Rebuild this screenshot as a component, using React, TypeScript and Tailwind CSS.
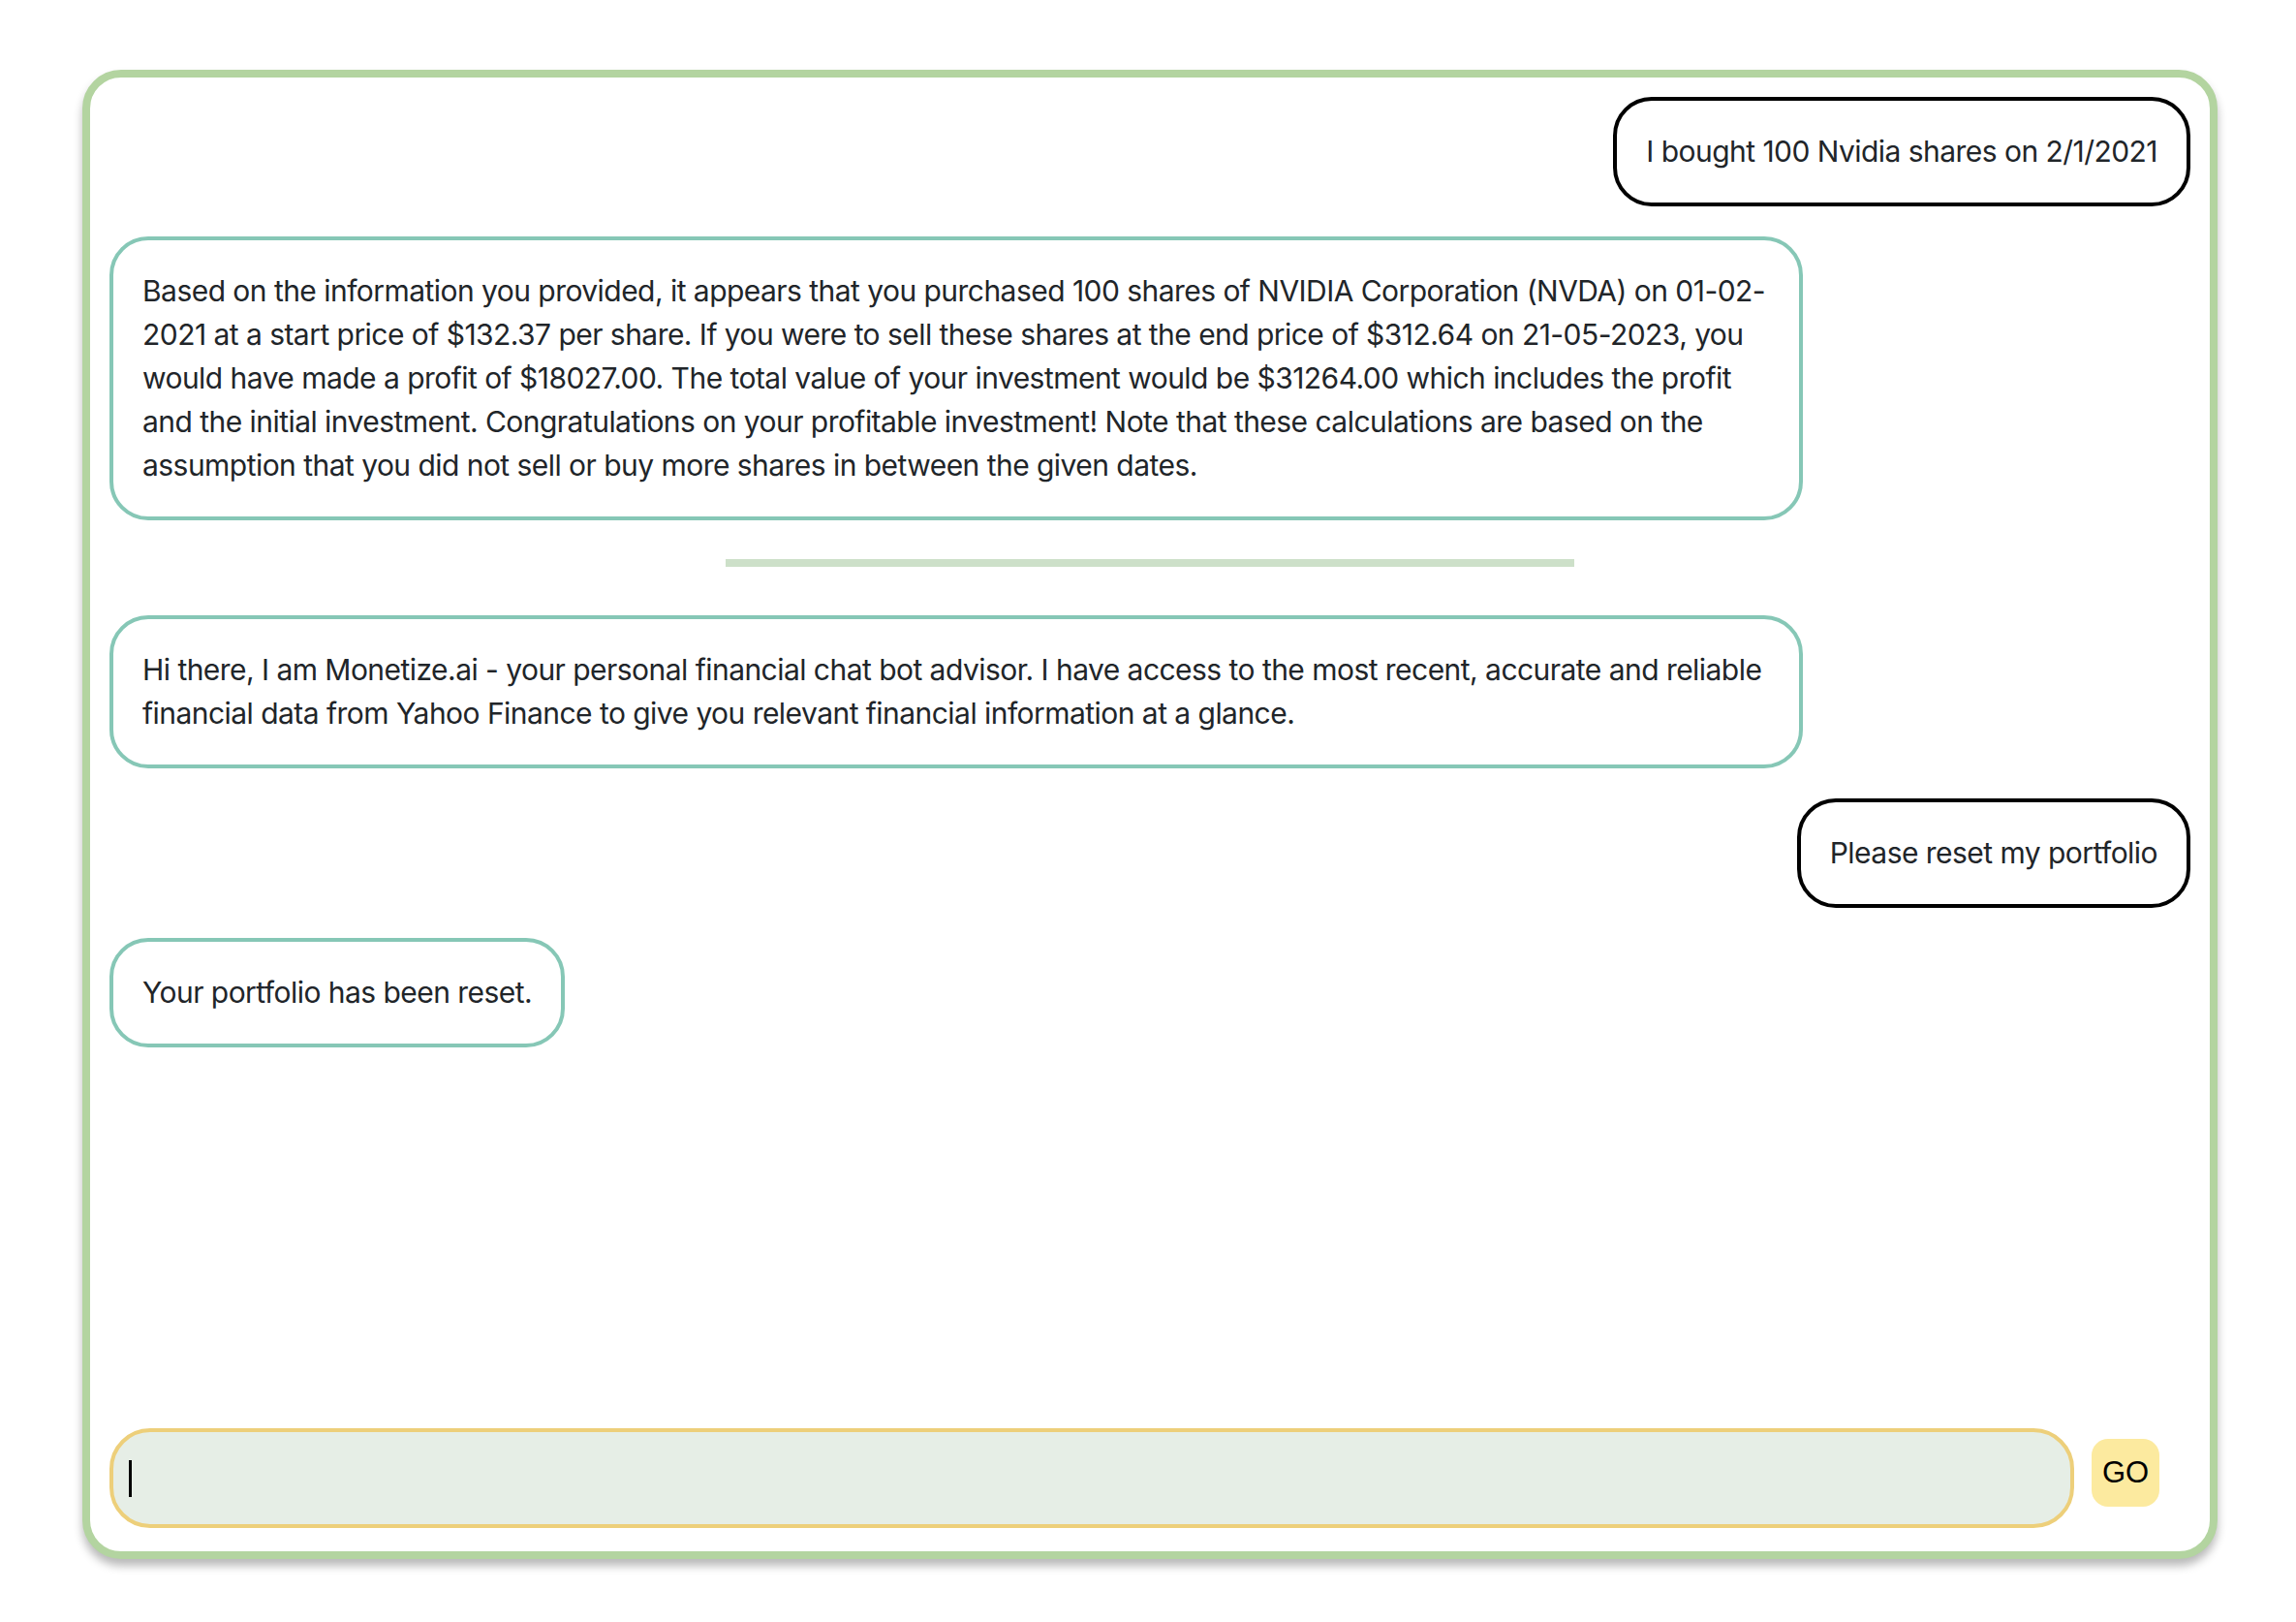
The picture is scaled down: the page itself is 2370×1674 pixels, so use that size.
import React from "react";

const font = { fontFamily: "Inter, 'Noto Sans', sans-serif" };

function UserBubble({ children }: { children: React.ReactNode }) {
  return (
    <div className="flex justify-end px-[20px]">
      <div className="max-w-[1748px] whitespace-nowrap rounded-[40px] border-[4px] border-black bg-white px-[30px] py-[30px] text-[30px] leading-[45px] tracking-[-0.54px] text-[#212529]">
        {children}
      </div>
    </div>
  );
}

function BotBubble({ lines, full }: { lines: string[]; full?: boolean }) {
  return (
    <div className="flex justify-start px-[20px]">
      <div
        className={
          full
            ? "w-[1748px] rounded-[40px] border-[4px] border-[#86c7b6] bg-white px-[30px] py-[30px] text-[30px] leading-[45px] tracking-[-0.54px] text-[#212529]"
            : "max-w-[1748px] rounded-[40px] border-[4px] border-[#86c7b6] bg-white px-[30px] py-[30px] text-[30px] leading-[45px] tracking-[-0.54px] text-[#212529]"
        }
      >
        {lines.map((l, i) => (
          <div key={i} className="whitespace-nowrap">
            {l}
          </div>
        ))}
      </div>
    </div>
  );
}

export default function App() {
  return (
    <div className="min-h-[1674px] bg-white pt-[72px]" style={font}>
      <div className="ml-[85px] flex h-[1537px] w-[2204px] flex-col rounded-[40px] border-[8px] border-[#b3d4a0] bg-white shadow-[0_7px_10px_rgba(0,0,0,0.28)]">
        <div className="flex flex-1 flex-col gap-[31px] pt-[20px]">
          <UserBubble>I bought 100 Nvidia shares on 2/1/2021</UserBubble>
          <BotBubble
            full
            lines={[
              "Based on the information you provided, it appears that you purchased 100 shares of NVIDIA Corporation (NVDA) on 01-02-",
              "2021 at a start price of $132.37 per share. If you were to sell these shares at the end price of $312.64 on 21-05-2023, you",
              "would have made a profit of $18027.00. The total value of your investment would be $31264.00 which includes the profit",
              "and the initial investment. Congratulations on your profitable investment! Note that these calculations are based on the",
              "assumption that you did not sell or buy more shares in between the given dates.",
            ]}
          />
          <div className="flex justify-center pt-[9px] pb-[19px]">
            <div className="h-[8px] w-[40%] bg-[#cde0c9]" />
          </div>
          <BotBubble
            full
            lines={[
              "Hi there, I am Monetize.ai - your personal financial chat bot advisor. I have access to the most recent, accurate and reliable",
              "financial data from Yahoo Finance to give you relevant financial information at a glance.",
            ]}
          />
          <UserBubble>Please reset my portfolio</UserBubble>
          <BotBubble lines={["Your portfolio has been reset."]} />
        </div>
        <div className="flex items-center px-[20px] pb-[24px]">
          <div className="flex h-[103px] flex-1 items-center rounded-[42px] border-[4px] border-[#edcf7a] bg-[#e6eee6] pl-[16px]">
            <span className="h-[38px] w-[3px] bg-black" />
            <input
              className="h-full flex-1 bg-transparent text-[30px] text-[#212529] caret-transparent outline-none"
              aria-label="message"
            />
          </div>
          <button
            className="mb-[11px] ml-[18px] mr-[32px] flex h-[70px] w-[70px] items-center justify-center rounded-[17px] bg-[#fcea9f] text-[31px] text-black"
            style={{ fontFamily: "'Liberation Sans', Arial, sans-serif" }}
          >
            GO
          </button>
        </div>
      </div>
    </div>
  );
}
